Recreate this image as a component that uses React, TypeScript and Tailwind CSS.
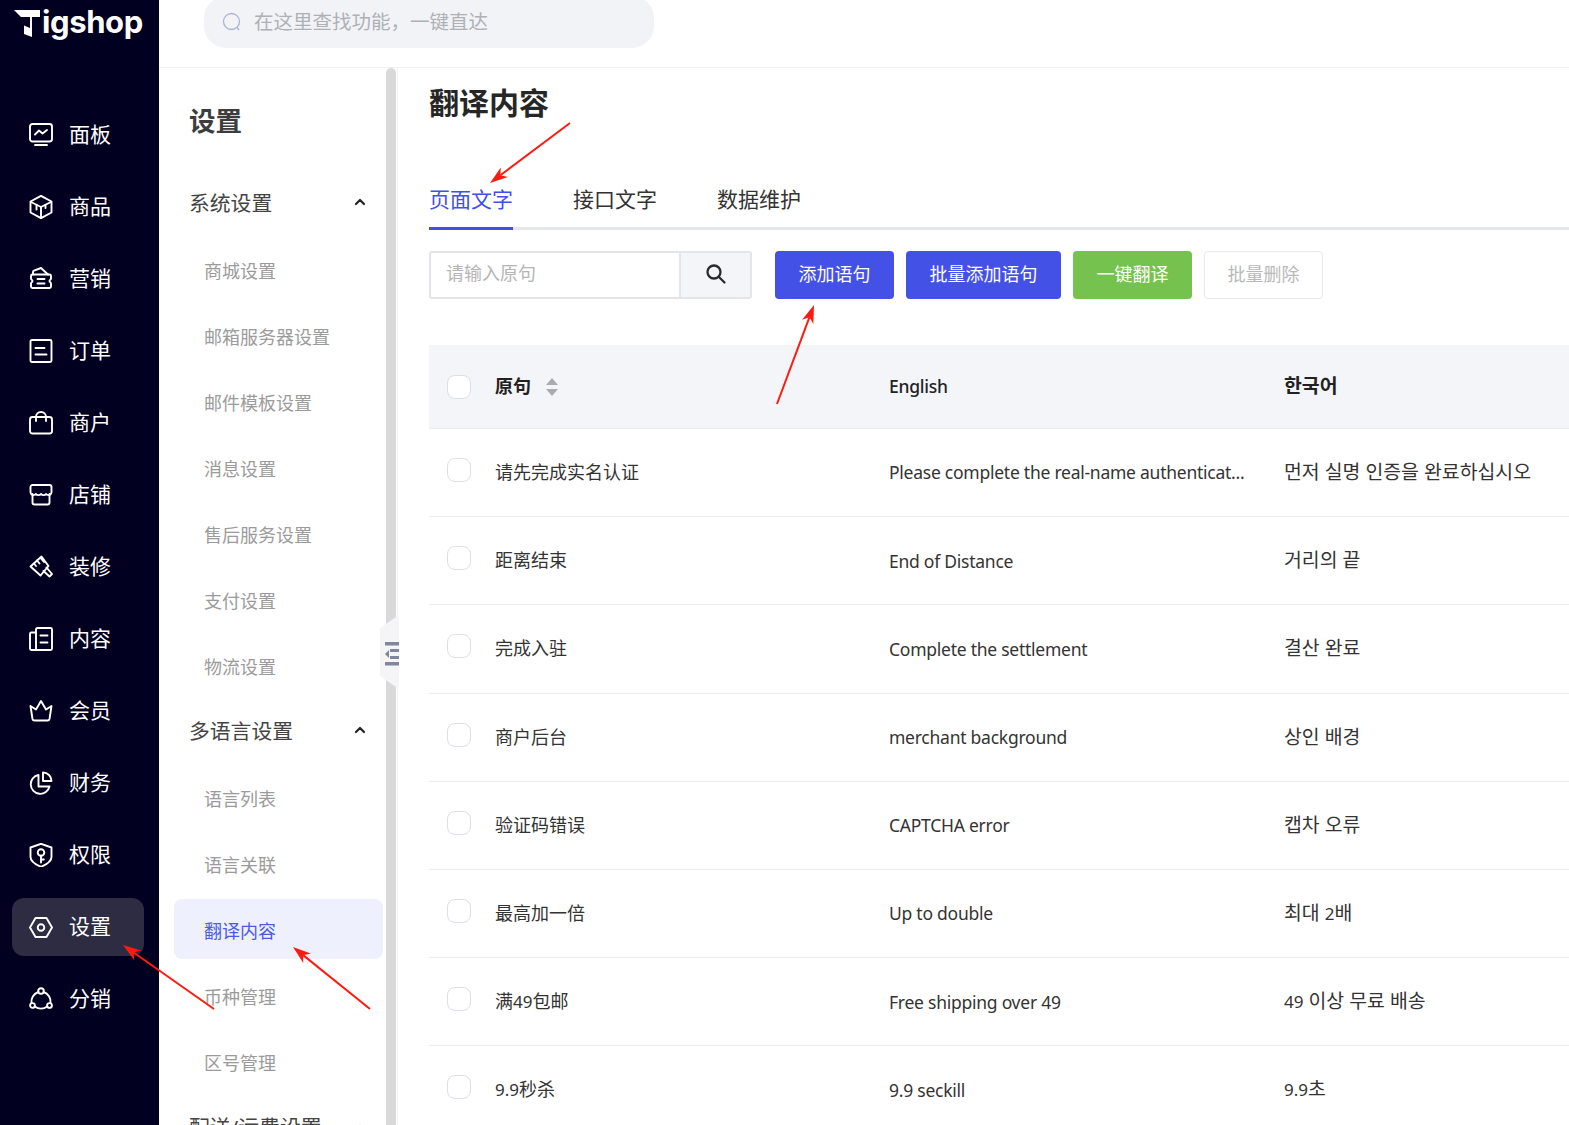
const FONT = { fontFamily: '"Noto Sans", "Noto Sans CJK SC", "Noto Sans CJK KR", sans-serif' };

const S = (p: { children: React.ReactNode }) => (
  <svg width="24" height="24" viewBox="0 0 24 24" fill="none" stroke="currentColor" strokeWidth="1.9" strokeLinecap="round" strokeLinejoin="round" className="shrink-0">
    {p.children}
  </svg>
);

const icons: Record<string, React.ReactNode> = {
  面板: <S><rect x="1" y="1" width="22" height="17.500" rx="2.500" /><path d="M6 11.500l4-4 3.500 3 4.500-3.500" /><path d="M6 22h12" /></S>,
  商品: <S><path d="M12 .8l10.500 5.700v11L12 23.200 1.500 17.500v-11z" /><path d="M2 7l10 5 10-5M12 12v11" /><path d="M7.500 10v4.500M16.500 10v3" /></S>,
  营销: <S><path d="M4 7.500V5a1.500 1.500 0 0 1 1-1.400L12 1l7 6.500" /><path d="M3.500 7.500h17a1.500 1.500 0 0 1 1.500 1.500v2.500c0 1.500-1.500 1-1.500 2.500s1.500 1 1.500 2.500v3a1.500 1.500 0 0 1-1.500 1.500h-17A1.500 1.500 0 0 1 2 19.500v-3c0-1.500 1.500-1 1.500-2.500S2 13 2 11.500V9a1.500 1.500 0 0 1 1.500-1.500z" /><path d="M8.500 12h7M8.500 16.500h7" /></S>,
  订单: <S><rect x="1.500" y="1" width="21" height="22" rx="1.500" /><path d="M6.500 9h9M6.500 15.500h11" /></S>,
  商户: <S><rect x="1" y="6" width="22" height="16.500" rx="2.500" /><path d="M7 10V6a5 5 0 0 1 10 0v4" /></S>,
  店铺: <S><path d="M3.500 11v8.500a2 2 0 0 0 2 2h13a2 2 0 0 0 2-2V11" /><path d="M3.500 2h17a2 2 0 0 1 2 2v5.500a3 3 0 0 1-5.300 1.500 3.500 3.500 0 0 1-5.200 0 3.500 3.500 0 0 1-5.200 0A3 3 0 0 1 1.500 9.500V4a2 2 0 0 1 2-2z" /></S>,
  装修: <S><path d="M12.500 1.500L1.500 11.500l10 9 8-9.500z" /><path d="M17.500 12.500l5.500 6.500-2.500 2.500-6-5.500" /><path d="M8 5.500l2.500 3M5 8.500l2 2.500M12 3.500l3 3.500" /></S>,
  内容: <S><rect x="7" y="1" width="16" height="22" rx="1.500" /><path d="M7 5.500H2.500A1.500 1.500 0 0 0 1 7v14.500A1.500 1.500 0 0 0 2.500 23H8" /><path d="M11.500 8.500h7M11.500 15.500h7" /></S>,
  会员: <S><path d="M1.500 7l5.500 3.500L12 2l5 8.500L22.500 7l-2 13a2 2 0 0 1-2 1.500h-13a2 2 0 0 1-2-1.500z" /></S>,
  财务: <S><path d="M9.500 4a9.500 9.500 0 1 0 11 11.500H9.500z" /><path d="M14 1.500a8.500 8.500 0 0 1 8.500 8.500H14z" /></S>,
  权限: <S><path d="M12 .8l10.500 3.700v9.500c0 4-5 7.500-10.500 9.800C6.500 21.500 1.500 18 1.500 14V4.500z" /><circle cx="12" cy="9.500" r="3.300" /><path d="M12 12.800V19.500M12 16.500h2.800" /></S>,
  设置: <S><path d="M6.500 3h11L23 12.500l-5.500 9.500h-11L1 12.500z" /><circle cx="12" cy="12.500" r="3.300" /></S>,
  分销: <S><circle cx="12" cy="4" r="2.800" /><circle cx="3.500" cy="18.500" r="2.400" /><circle cx="20.500" cy="18.500" r="2.400" /><path d="M9.500 5A10 10 0 0 0 2.500 16M14.500 5a10 10 0 0 1 7 11M5.800 19.500a10 10 0 0 0 12.400 0" /></S>,
};

const nav = ["面板", "商品", "营销", "订单", "商户", "店铺", "装修", "内容", "会员", "财务", "权限", "设置", "分销"];
const group1 = ["商城设置", "邮箱服务器设置", "邮件模板设置", "消息设置", "售后服务设置", "支付设置", "物流设置"];
const group2 = ["语言列表", "语言关联", "翻译内容", "币种管理", "区号管理"];
const rows = [
  ["请先完成实名认证", "Please complete the real-name authenticat...", "먼저 실명 인증을 완료하십시오"],
  ["距离结束", "End of Distance", "거리의 끝"],
  ["完成入驻", "Complete the settlement", "결산 완료"],
  ["商户后台", "merchant background", "상인 배경"],
  ["验证码错误", "CAPTCHA error", "캡차 오류"],
  ["最高加一倍", "Up to double", "최대 2배"],
  ["满49包邮", "Free shipping over 49", "49 이상 무료 배송"],
  ["9.9秒杀", "9.9 seckill", "9.9초"],
];

const Digits = ({ text }: { text: string }) => (
  <>
    {text.split(/(\d[\d.]*)/).map((part, i) =>
      i % 2 === 1 ? <span key={i} className="text-[17px]">{part}</span> : <span key={i}>{part}</span>
    )}
  </>
);

const Chevron = () => (
  <svg width="12" height="8" viewBox="0 0 12 8" fill="none" stroke="#222" strokeWidth="2.200" strokeLinecap="round" strokeLinejoin="round"><path d="M2 6l4-4 4 4" /></svg>
);

const Check = () => <span className="block w-6 h-6 rounded-lg border border-[#dcdfe6] bg-white shrink-0" />;

const Arrow = ({ x1, y1, x2, y2 }: { x1: number; y1: number; x2: number; y2: number }) => {
  const a = Math.atan2(y2 - y1, x2 - x1);
  const l = 18, w = 6;
  const cos = Math.cos(a), sin = Math.sin(a);
  const bx = x2 - cos * l, by = y2 - sin * l;
  const mx = x2 - cos * l * 0.72, my = y2 - sin * l * 0.72;
  const nx = -sin * w, ny = cos * w;
  return (
    <g>
      <line x1={x1} y1={y1} x2={mx} y2={my} stroke="#ff1a10" strokeWidth="2" />
      <polygon points={`${x2},${y2} ${bx + nx},${by + ny} ${mx},${my} ${bx - nx},${by - ny}`} fill="#ff1a10" />
    </g>
  );
};

export default function App() {
  return (
    <div className="relative flex h-[1125px] w-full overflow-hidden bg-white" style={FONT}>
      <aside className="w-[159px] shrink-0 bg-[#010020] flex flex-col">
        <div className="h-[97px] pl-[14px] pt-[5px] flex items-start text-white">
          <svg width="27" height="28" viewBox="0 0 27 28" className="mt-[5px] shrink-0">
            <path d="M0 0H26V7H18V27L10 24V15.500L16 18V7H7z" fill="#fff" />
          </svg>
          <span className="text-[31px] leading-[34px] font-bold tracking-[-0.4px] ml-[1px]" style={{ fontFamily: "Inter, sans-serif" }}>igshop</span>
        </div>
        <nav className="flex flex-col gap-[14px] pl-3 pr-[15px] pt-[9px]">
          {nav.map((n) => (
            <div key={n} className={`h-[58px] flex items-center gap-[16px] pl-[17px] text-white text-[21px] rounded-xl ${n === "设置" ? "bg-[#2e2c42]" : ""}`}>
              {icons[n]}
              <span>{n}</span>
            </div>
          ))}
        </nav>
      </aside>

      <div className="flex-1 flex flex-col min-w-0">
        <header className="h-[68px] shrink-0 border-b border-[#f0f1f4] pl-[45px]">
          <div className="-mt-[4px] w-[450px] h-[52px] rounded-[22px] bg-[#f2f3f7] flex items-center pl-[18px] gap-[12px] text-[19.500px] text-[#aeb0b6]">
            <svg width="20" height="20" viewBox="0 0 20 20" fill="none" stroke="#a9b4cf" strokeWidth="1.300"><circle cx="9.500" cy="9.500" r="8" /><path d="M15 15.500l2 2.500" /></svg>
            <span>在这里查找功能，一键直达</span>
          </div>
        </header>
        <div className="relative flex-1 flex min-h-0">
          <div className="w-[227px] shrink-0 pl-[15px] overflow-hidden">
            <h2 className="pl-[15px] pt-[31px] h-[111px] text-[26.500px] leading-[44px] font-bold text-[#3d3d3d]">设置</h2>
            <div className="h-[59px] pb-[9px] pl-[15px] pr-[20px] flex items-center justify-between text-[20.800px] text-[#444]"><span>系统设置</span><span className="-mt-[4px]"><Chevron /></span></div>
            {group1.map((g) => (
              <div key={g} className="h-[66px] pl-[30px] flex items-center text-[18px] text-[#9b9b9b]">{g}</div>
            ))}
            <div className="h-[64px] pl-[15px] pr-[20px] flex items-center justify-between text-[20.800px] text-[#444]"><span>多语言设置</span><span className="-mt-[4px]"><Chevron /></span></div>
            <div className="flex flex-col pt-[2px]">
              {group2.map((g) => (
                <div key={g} className={`h-[66px] pl-[30px] flex items-center text-[18px] ${g === "翻译内容" ? "text-[#4a5be6] relative" : "text-[#9b9b9b]"}`}>
                  {g === "翻译内容" && <span className="absolute left-0 right-[3px] top-[1px] bottom-[5px] bg-[#eef0fd] rounded-lg" />}
                  <span className="relative">{g}</span>
                </div>
              ))}
            </div>
            <div className="h-[64px] pl-[15px] pr-[20px] flex items-center justify-between text-[20.800px] text-[#444]"><span>配送/运费设置</span><Chevron /></div>
          </div>
          <div className="w-[10px] shrink-0 bg-[#d9d9d9] rounded-t-md" />
          <div className="w-[2px] shrink-0 bg-white border-r border-[#f0f1f4]" />

          <div className="absolute left-[221px] top-[547px] w-[19px] h-[74px]">
            <svg width="19" height="74" viewBox="0 0 19 74">
              <path d="M19 0L0 13v48l19 13z" fill="#f5f5f7" />
              <rect x="5" y="27" width="14" height="3.500" fill="#7f869e" />
              <rect x="5" y="47" width="14" height="3.500" fill="#7f869e" />
              <rect x="10" y="34" width="9" height="3" fill="#7f869e" />
              <rect x="10" y="41" width="9" height="3" fill="#7f869e" />
              <path d="M5 39l4-4v8z" fill="#7f869e" />
            </svg>
          </div>

          <main className="flex-1 min-w-0 pl-[31px] overflow-hidden">
            <h1 className="h-[72px] pt-[12px] text-[30px] leading-[46px] font-bold text-[#262626]">翻译内容</h1>
            <div className="h-[90px] pt-[37px] flex border-b-[3px] border-[#e6e7ec] text-[21px] gap-[60px] text-[#333]">
              <div className="relative h-[52px] flex items-start pt-[7px] text-[#4150e6]">页面文字<span className="absolute left-0 right-0 bottom-[-1px] h-[3px] bg-[#4150e6]" /></div>
              <div className="pt-[7px]">接口文字</div>
              <div className="pt-[7px]">数据维护</div>
            </div>
            <div className="mt-[21px] flex items-center">
              <div className="w-[323px] h-[48px] border-2 border-[#e4e5ea] rounded-[3px] flex text-[18px] text-[#b5b5b5] box-border">
                <div className="flex-1 pl-[15px] pb-[4px] flex items-center">请输入原句</div>
                <div className="w-[71px] border-l-2 border-[#e4e5ea] bg-[#f4f5f9] flex items-center justify-center">
                  <svg className="-mt-[3px]" width="22" height="22" viewBox="0 0 22 22" fill="none" stroke="#2b2b2b" strokeWidth="2.300" strokeLinecap="round"><circle cx="9" cy="9" r="6.500" /><path d="M14 14l5.500 5.500" /></svg>
                </div>
              </div>
              <div className="ml-[23px] w-[119px] h-[48px] pb-[2px] rounded bg-[#4351e6] text-white text-[18px] flex items-center justify-center">添加语句</div>
              <div className="ml-3 w-[155px] h-[48px] pb-[2px] rounded bg-[#4351e6] text-white text-[18px] flex items-center justify-center">批量添加语句</div>
              <div className="ml-3 w-[119px] h-[48px] pb-[2px] rounded bg-[#75c24f] text-white text-[18px] flex items-center justify-center">一键翻译</div>
              <div className="ml-3 w-[119px] h-[48px] pb-[2px] rounded border border-[#e8e9ec] text-[#b9b9b9] text-[18px] flex items-center justify-center">批量删除</div>
            </div>
            <div className="mt-[46px] w-[1200px]">
              <div className="h-[84px] bg-[#f4f5f9] border-b border-[#ebecf0] flex items-center text-[18px] text-[#222] font-semibold">
                <div className="w-[460px] pl-[18px] flex items-center">
                  <Check />
                  <span className="ml-6">原句</span>
                  <svg width="12" height="18" viewBox="0 0 12 18" className="ml-[15px]" fill="#ababab"><path d="M6 0l6 7H0zM6 18l6-7H0z" /></svg>
                </div>
                <div className="w-[395px] font-medium text-[17.500px] tracking-[-0.25px]">English</div>
                <div className="flex-1 -mt-[2px] text-[19.400px]">한국어</div>
              </div>
              {rows.map((r) => (
                <div key={r[0]} className="h-[88.200px] border-b border-[#ebecf2] flex items-center text-[18px] text-[#333]">
                  <div className="w-[460px] pl-[18px] flex items-center">
                    <div className="-mt-[5px]"><Check /></div>
                    <span className="ml-6"><Digits text={r[0]} /></span>
                  </div>
                  <div className="w-[395px] text-[17.500px] tracking-[-0.25px]">{r[1]}</div>
                  <div className="flex-1 -mt-[2px] text-[19.400px]"><Digits text={r[2]} /></div>
                </div>
              ))}
            </div>
          </main>
        </div>
      </div>

      <svg className="absolute inset-0 pointer-events-none" width="1569" height="1125">
        <Arrow x1={570} y1={123} x2={490} y2={183} />
        <Arrow x1={777} y1={404} x2={814} y2={305} />
        <Arrow x1={214} y1={1009} x2={123} y2={945} />
        <Arrow x1={370} y1={1009} x2={293} y2={947} />
      </svg>
    </div>
  );
}
